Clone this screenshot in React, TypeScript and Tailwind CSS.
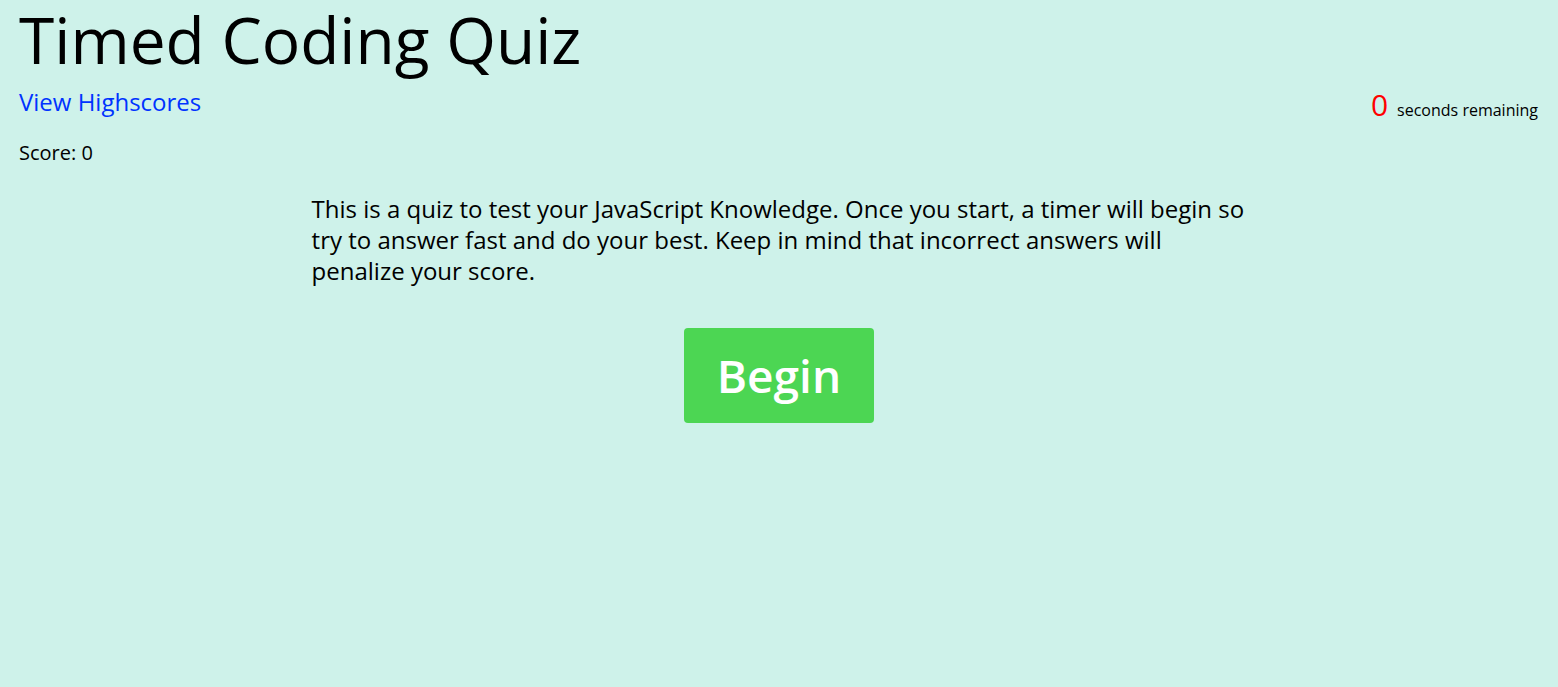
export default function App() {
  return (
    <div className="min-h-screen bg-[#cef2ea] text-black font-['Open_Sans',sans-serif]">
      {/* header */}
      <header className="px-[19px]">
        <h1 className="text-[64px] leading-[80px]">Timed Coding Quiz</h1>
        <div className="flex items-start justify-between mt-[6px]">
          <a href="#" className="text-[24px] text-[#0033ff] leading-[32px]">View Highscores</a>
          <div className="flex items-baseline gap-[9px] mt-[4px] mr-[1px] leading-[30px]">
            <span className="text-[30px] text-[#ff0000]">0</span>
            <span className="text-[16px]">seconds remaining</span>
          </div>
        </div>
        <p className="text-[20px] leading-[28px] mt-[14px]">Score: 0</p>
      </header>

      <main className="w-[60%] mx-auto mt-[26px]">
        <p className="text-[24px] leading-[31px] font-medium">
          This is a quiz to test your JavaScript Knowledge. Once you start, a timer will begin so try to answer fast and do your best. Keep in mind that incorrect answers will penalize your score.
        </p>
        <div className="flex justify-center mt-[42px]">
          <button className="bg-[#4cd653] text-white text-[46px] font-semibold rounded-[4px] px-[33px] h-[95px]">
            Begin
          </button>
        </div>
      </main>
    </div>
  );
}
